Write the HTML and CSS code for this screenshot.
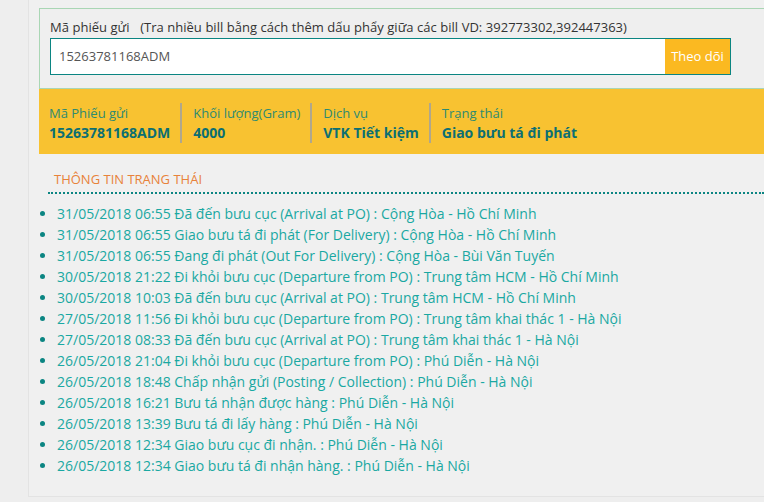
FILE: index.html
```html
<!DOCTYPE html>
<html lang="vi">
<head>
<meta charset="utf-8">
<title>Tra cứu</title>
<link rel="stylesheet" href="styles.css">
</head>
<body>
<div class="panel">
  <div class="search-box">
    <div class="search-label">Mã phiếu gửi&nbsp;&nbsp; (Tra nhiều bill bằng cách thêm dấu phẩy giữa các bill VD: 392773302,392447363)</div>
    <div class="search-row">
      <div class="search-input">15263781168ADM</div>
      <div class="search-btn">Theo dõi</div>
    </div>
  </div>
  <div class="info-bar">
    <div class="info-col">
      <div class="info-label">Mã Phiếu gửi</div>
      <div class="info-value">15263781168ADM</div>
    </div>
    <div class="info-col">
      <div class="info-label">Khối lượng(Gram)</div>
      <div class="info-value">4000</div>
    </div>
    <div class="info-col">
      <div class="info-label">Dịch vụ</div>
      <div class="info-value">VTK Tiết kiệm</div>
    </div>
    <div class="info-col last">
      <div class="info-label">Trạng thái</div>
      <div class="info-value">Giao bưu tá đi phát</div>
    </div>
  </div>
  <div class="status">
    <div class="status-title">THÔNG TIN TRẠNG THÁI</div>
    <ul class="status-list">
      <li>31/05/2018 06:55 Đã đến bưu cục (Arrival at PO) : Cộng Hòa - Hồ Chí Minh</li>
      <li>31/05/2018 06:55 Giao bưu tá đi phát (For Delivery) : Cộng Hòa - Hồ Chí Minh</li>
      <li>31/05/2018 06:55 Đang đi phát (Out For Delivery) : Cộng Hòa - Bùi Văn Tuyến</li>
      <li>30/05/2018 21:22 Đi khỏi bưu cục (Departure from PO) : Trung tâm HCM - Hồ Chí Minh</li>
      <li>30/05/2018 10:03 Đã đến bưu cục (Arrival at PO) : Trung tâm HCM - Hồ Chí Minh</li>
      <li>27/05/2018 11:56 Đi khỏi bưu cục (Departure from PO) : Trung tâm khai thác 1 - Hà Nội</li>
      <li>27/05/2018 08:33 Đã đến bưu cục (Arrival at PO) : Trung tâm khai thác 1 - Hà Nội</li>
      <li>26/05/2018 21:04 Đi khỏi bưu cục (Departure from PO) : Phú Diễn - Hà Nội</li>
      <li>26/05/2018 18:48 Chấp nhận gửi (Posting / Collection) : Phú Diễn - Hà Nội</li>
      <li>26/05/2018 16:21 Bưu tá nhận được hàng : Phú Diễn - Hà Nội</li>
      <li>26/05/2018 13:39 Bưu tá đi lấy hàng : Phú Diễn - Hà Nội</li>
      <li>26/05/2018 12:34 Giao bưu cục đi nhận. : Phú Diễn - Hà Nội</li>
      <li>26/05/2018 12:34 Giao bưu tá đi nhận hàng. : Phú Diễn - Hà Nội</li>
    </ul>
  </div>
</div>
</body>
</html>
```

FILE: styles.css
```css
html, body {
  margin: 0;
  padding: 0;
  background: #eeeeee;
  overflow: hidden;
}
body {
  font-family: "Open Sans", "Noto Sans", sans-serif;
  font-size: 13px;
}
.panel {
  margin-left: 28px;
  height: 497px;
  background: #f0f0f0;
  border-left: 1px solid #e3e3e3;
  border-bottom: 1px solid #e3e3e3;
  padding: 8px 0 0 10px;
  box-sizing: border-box;
}
.search-box {
  border-top: 1px solid #a9d6b4;
  border-left: 1px solid #a9d6b4;
  border-bottom: 1px solid #a9d6b4;
  background: #efefef;
  padding: 9px 0 13px 10px;
}
.search-label {
  color: #333333;
  word-spacing: 0.2px;
  line-height: 18px;
  height: 20px;
  white-space: nowrap;
}
.search-row {
  display: flex;
  width: 681px;
  height: 37px;
  border: 1px solid #0b8582;
  box-sizing: border-box;
  background: #ffffff;
}
.search-input {
  flex: 1;
  color: #555555;
  padding-left: 8px;
  line-height: 35px;
}
.search-btn {
  width: 65px;
  background: #fbb921;
  color: #ffffff;
  text-align: center;
  line-height: 35px;
}
.info-bar {
  display: flex;
  background: #f8c231;
  padding: 14px 0 11px 10px;
}
.info-col {
  padding-right: 10px;
  margin-right: 11px;
  border-right: 2px solid #b0a78c;
  height: 40px;
}
.info-col.last {
  border-right: none;
}
.info-label {
  color: #2e8a72;
  line-height: 20px;
}
.info-value {
  color: #0c6f73;
  font-weight: bold;
  font-size: 14px;
  line-height: 20px;
}
.status {
  padding-top: 16px;
}
.status-title {
  color: #e8823a;
  line-height: 18px;
  padding-bottom: 4px;
  border-bottom: 2px dotted #0b8582;
  margin-left: 9px;
  padding-left: 6px;
}
.status-list {
  margin: 9px 0 0 0;
  padding: 0 0 0 18px;
  color: #1aa8a2;
  font-size: 14px;
  line-height: 21px;
}
.status-list li {
  white-space: nowrap;
}
.status-list li::marker {
  color: #0b8582;
}
```
